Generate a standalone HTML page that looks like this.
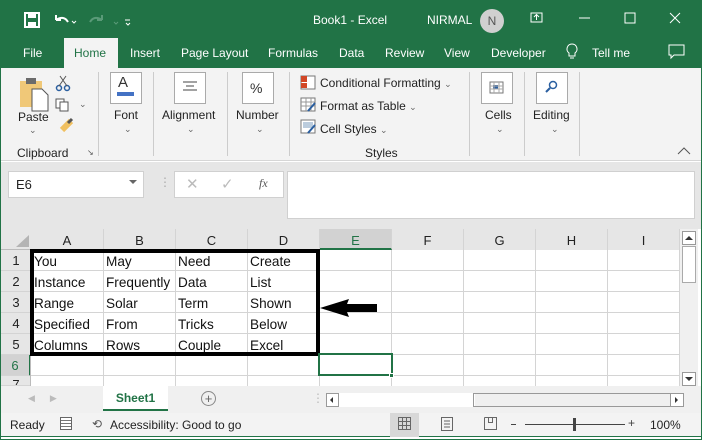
<!DOCTYPE html>
<html><head><meta charset="utf-8"><style>
*{margin:0;padding:0;box-sizing:border-box}
body{width:702px;height:440px;overflow:hidden;font-family:"Liberation Sans",sans-serif;background:#fff;position:relative;font-size:12px;color:#222}
.a{position:absolute}
.t{color:#fff;font-size:12px}
.rb{color:#222;font-size:12px}
.box{position:absolute;border:1px solid #aaa;background:#fff}
.sep{position:absolute;width:1px;background:#ccc}
.col{position:absolute;top:229px;height:21px;text-align:center;line-height:23px;font-size:13px;color:#222;border-right:1px solid #d4d4d4;background:#e6e6e6}
.row{position:absolute;left:1px;width:30px;text-align:center;font-size:13px;color:#222;background:#e6e6e6;border-bottom:1px solid #d4d4d4}
.c{position:absolute;font-size:13.6px;color:#111}
.ch{font-size:9px;color:#666}
</style></head><body>
<div class="a" style="left:0;top:0;width:702px;height:440px;border:1px solid #217346;border-radius:4px 4px 0 0"></div>
<div class="a" style="left:0;top:0;width:702px;height:68px;background:#217346"></div>
<svg class="a" style="left:24px;top:12px" width="110" height="18">
<rect x="1" y="1" width="14" height="14" fill="none" stroke="#fff" stroke-width="2"/><rect x="4" y="2" width="8" height="4" fill="#fff"/><rect x="4" y="10" width="8" height="5" fill="#fff"/>
<path d="M32 8 q8-5 12 2 M32 8 l0-5 M32 8 l5 0" stroke="#fff" stroke-width="2" fill="none"/>
<path d="M48 9 l2 2 l2-2" stroke="#fff" fill="none"/>
<path d="M78 8 q-8-5 -12 2 M78 8 l0-5 M78 8 l-5 0" stroke="#5a9a78" stroke-width="2" fill="none"/>
<path d="M90 10 l2 2 l2-2" stroke="#5a9a78" fill="none"/>
<path d="M101 8 h5 M102 11 l2 2 l2-2" stroke="#fff" fill="none"/>
</svg>
<div class="a t" style="left:313px;top:13px">Book1  -  Excel</div>
<div class="a t" style="left:427px;top:13px">NIRMAL</div>
<div class="a" style="left:480px;top:9px;width:24px;height:24px;border-radius:50%;background:#d0d0d0;color:#555;text-align:center;line-height:24px;font-size:12px">N</div>
<svg class="a" style="left:530px;top:11px" width="160" height="16">
<rect x="1" y="2" width="11" height="9" fill="none" stroke="#fff"/><path d="M6.5 9 V4 M4 6 l2.5-2.5 l2.5 2.5" stroke="#fff" fill="none"/>
<path d="M49 7 h11" stroke="#fff"/>
<rect x="95" y="2" width="10" height="10" fill="none" stroke="#fff"/>
<path d="M140 2 l10 10 M150 2 l-10 10" stroke="#fff"/>
</svg>
<div class="a" style="left:64px;top:38px;width:54px;height:30px;background:#f3f3f3"></div>
<div class="a t" style="left:23px;top:46px">File</div>
<div class="a" style="left:74px;top:46px;color:#217346">Home</div>
<div class="a t" style="left:130px;top:46px">Insert</div>
<div class="a t" style="left:181px;top:46px">Page Layout</div>
<div class="a t" style="left:268px;top:46px">Formulas</div>
<div class="a t" style="left:339px;top:46px">Data</div>
<div class="a t" style="left:385px;top:46px">Review</div>
<div class="a t" style="left:444px;top:46px">View</div>
<div class="a t" style="left:491px;top:46px">Developer</div>
<svg class="a" style="left:565px;top:43px" width="14" height="18"><path d="M7 1 a5 5 0 0 1 3 9 v3 h-6 v-3 a5 5 0 0 1 3-9 M5 15 h4" stroke="#fff" fill="none"/></svg>
<div class="a t" style="left:592px;top:46px">Tell me</div>
<svg class="a" style="left:668px;top:44px" width="18" height="16"><path d="M1 1 h15 v10 h-10 l-3 3 v-3 h-2 z" stroke="#fff" fill="none"/></svg>
<div class="a" style="left:1px;top:68px;width:700px;height:93px;background:#f3f3f3;border-bottom:1px solid #d6d6d6"></div>
<svg class="a" style="left:18px;top:75px" width="60" height="60">
<rect x="2" y="6" width="22" height="26" fill="#f0c878"/><rect x="8" y="3" width="10" height="6" fill="#6b6b6b"/>
<path d="M14 14 h10 l6 6 v16 h-16 z" fill="#fff" stroke="#555"/>
<circle cx="41" cy="13" r="2.5" fill="none" stroke="#2a5fa0" stroke-width="1.5"/><circle cx="49" cy="13" r="2.5" fill="none" stroke="#2a5fa0" stroke-width="1.5"/><path d="M42 1 l7 10 M48 1 l-7 10" stroke="#555"/>
<rect x="38" y="24" width="8" height="9" fill="#fff" stroke="#555"/><rect x="42" y="27" width="8" height="9" fill="#fff" stroke="#555"/>
<path d="M44 55 l9-9" stroke="#f0c060" stroke-width="6"/><path d="M50 48 l4-4" stroke="#555" stroke-width="3"/>
</svg>
<div class="a rb" style="left:18px;top:110px">Paste</div>
<div class="a ch" style="left:29px;top:125px">⌄</div>
<div class="a ch" style="left:79px;top:99px">⌄</div>
<div class="a rb" style="left:17px;top:146px">Clipboard</div>
<div class="a" style="left:87px;top:148px;font-size:8px;color:#555">↘</div>
<div class="sep" style="left:98px;top:72px;height:84px"></div>
<div class="box" style="left:110px;top:72px;width:32px;height:32px"></div>
<div class="a" style="left:118px;top:74px;font-size:15px;color:#333">A</div><div class="a" style="left:117px;top:92px;width:17px;height:4px;background:#4472c4"></div>
<div class="a rb" style="left:114px;top:108px">Font</div>
<div class="a ch" style="left:124px;top:124px">⌄</div>
<div class="sep" style="left:153px;top:72px;height:84px"></div>
<div class="box" style="left:174px;top:72px;width:32px;height:32px"></div>
<svg class="a" style="left:182px;top:81px" width="16" height="12"><path d="M1 1h14M4 5h8M1 9h14" stroke="#444"/></svg>
<div class="a rb" style="left:162px;top:108px">Alignment</div>
<div class="a ch" style="left:187px;top:124px">⌄</div>
<div class="sep" style="left:227px;top:72px;height:84px"></div>
<div class="box" style="left:242px;top:72px;width:32px;height:32px"></div>
<div class="a" style="left:250px;top:80px;font-size:14px;color:#333">%</div>
<div class="a rb" style="left:236px;top:108px">Number</div>
<div class="a ch" style="left:256px;top:124px">⌄</div>
<div class="sep" style="left:289px;top:72px;height:84px"></div>
<svg class="a" style="left:300px;top:75px" width="18" height="62">
<rect x="1" y="1" width="14" height="13" fill="#fff" stroke="#777"/><rect x="1" y="1" width="6" height="6" fill="#d24726"/><rect x="1" y="8" width="6" height="5" fill="#d24726"/>
<rect x="1" y="23" width="14" height="13" fill="#fff" stroke="#777"/><path d="M1 27h14M1 31h14M6 23v13M11 23v13" stroke="#999"/><path d="M8 36 l7-8" stroke="#2a5fa0" stroke-width="2"/>
<rect x="1" y="45" width="14" height="13" fill="#fff" stroke="#777"/><rect x="3" y="47" width="10" height="6" fill="#bcd"/><path d="M8 58 l7-8" stroke="#2a5fa0" stroke-width="2"/>
</svg>
<div class="a rb" style="left:320px;top:76px">Conditional Formatting <span class="ch">⌄</span></div>
<div class="a rb" style="left:320px;top:99px">Format as Table <span class="ch">⌄</span></div>
<div class="a rb" style="left:320px;top:122px">Cell Styles <span class="ch">⌄</span></div>
<div class="a rb" style="left:365px;top:146px">Styles</div>
<div class="sep" style="left:469px;top:72px;height:84px"></div>
<div class="box" style="left:481px;top:72px;width:32px;height:32px"></div>
<svg class="a" style="left:489px;top:79px" width="16" height="16"><rect x="1" y="3" width="13" height="11" fill="#fff" stroke="#777"/><rect x="4" y="6" width="5" height="4" fill="#2a5fa0"/><path d="M1 7h13M1 10h13M5 3v11M10 3v11" stroke="#aaa"/></svg>
<div class="a rb" style="left:485px;top:108px">Cells</div>
<div class="a ch" style="left:496px;top:124px">⌄</div>
<div class="sep" style="left:524px;top:72px;height:84px"></div>
<div class="box" style="left:536px;top:72px;width:32px;height:32px"></div>
<svg class="a" style="left:545px;top:80px" width="14" height="14"><circle cx="8" cy="5" r="3.5" fill="none" stroke="#2a5fa0" stroke-width="1.5"/><path d="M5 8 l-4 4" stroke="#2a5fa0" stroke-width="2"/></svg>
<div class="a rb" style="left:533px;top:108px">Editing</div>
<div class="a ch" style="left:551px;top:124px">⌄</div>
<div class="sep" style="left:579px;top:72px;height:84px"></div>
<svg class="a" style="left:677px;top:146px" width="14" height="9"><path d="M1 8 l6-6 l6 6" stroke="#555" fill="none"/></svg>
<div class="a" style="left:1px;top:162px;width:700px;height:67px;background:#e6e6e6"></div>
<div class="box" style="left:8px;top:171px;width:136px;height:27px;border-color:#d0d0d0"></div>
<div class="a" style="left:16px;top:177px;font-size:13px">E6</div>
<div class="a" style="left:129px;top:180px;width:0;height:0;border-left:4px solid transparent;border-right:4px solid transparent;border-top:4px solid #666"></div>
<div class="a" style="left:159px;top:175px;color:#aaa;font-size:12px">⋮</div>
<div class="box" style="left:174px;top:171px;width:110px;height:27px;border-color:#d0d0d0"></div>
<div class="a" style="left:186px;top:175px;color:#bbb;font-size:15px">✕</div>
<div class="a" style="left:221px;top:175px;color:#bbb;font-size:15px">✓</div>
<div class="a" style="left:259px;top:176px;color:#555;font-size:12px;font-style:italic;font-family:'Liberation Serif',serif">fx</div>
<div class="box" style="left:287px;top:171px;width:408px;height:48px;border-color:#d0d0d0"></div>
<div class="a" style="left:1px;top:229px;width:679px;height:21px;background:#e6e6e6;border-bottom:1px solid #bbb"></div>
<svg class="a" style="left:14px;top:234px" width="16" height="14"><path d="M15 1 V13 H2 z" fill="#b4b4b4"/></svg>
<div class="col" style="left:31px;width:73px">A</div>
<div class="col" style="left:104px;width:72px">B</div>
<div class="col" style="left:176px;width:72px">C</div>
<div class="col" style="left:248px;width:72px">D</div>
<div class="col" style="left:320px;width:72px;background:#d2d2d2;color:#217346;border-bottom:2px solid #217346">E</div>
<div class="col" style="left:392px;width:72px">F</div>
<div class="col" style="left:464px;width:72px">G</div>
<div class="col" style="left:536px;width:72px">H</div>
<div class="col" style="left:608px;width:72px">I</div>
<svg class="a" style="left:31px;top:250px" width="649" height="136">
<g stroke="#d4d4d4" stroke-width="1">
<path d="M0 20.5h649M0 41.5h649M0 62.5h649M0 83.5h649M0 104.5h649M0 125.5h649"/>
<path d="M72.5 0v136M144.5 0v136M216.5 0v136M288.5 0v136M360.5 0v136M432.5 0v136M504.5 0v136M576.5 0v136M648.5 0v136"/>
</g></svg>
<div class="row" style="top:250px;height:21px;line-height:22px">1</div>
<div class="row" style="top:271px;height:21px;line-height:22px">2</div>
<div class="row" style="top:292px;height:21px;line-height:22px">3</div>
<div class="row" style="top:313px;height:21px;line-height:22px">4</div>
<div class="row" style="top:334px;height:21px;line-height:22px">5</div>
<div class="row" style="top:355px;height:21px;line-height:22px;background:#d2d2d2;color:#217346;border-right:2px solid #217346">6</div>
<div class="row" style="top:376px;height:10px;line-height:18px;overflow:hidden">7</div>
<div class="a" style="left:30px;top:250px;width:1px;height:136px;background:#bbb"></div>
<div class="c" style="left:34px;top:254px">You</div><div class="c" style="left:106px;top:254px">May</div><div class="c" style="left:178px;top:254px">Need</div><div class="c" style="left:250px;top:254px">Create</div>
<div class="c" style="left:34px;top:275px">Instance</div><div class="c" style="left:106px;top:275px">Frequently</div><div class="c" style="left:178px;top:275px">Data</div><div class="c" style="left:250px;top:275px">List</div>
<div class="c" style="left:34px;top:296px">Range</div><div class="c" style="left:106px;top:296px">Solar</div><div class="c" style="left:178px;top:296px">Term</div><div class="c" style="left:250px;top:296px">Shown</div>
<div class="c" style="left:34px;top:317px">Specified</div><div class="c" style="left:106px;top:317px">From</div><div class="c" style="left:178px;top:317px">Tricks</div><div class="c" style="left:250px;top:317px">Below</div>
<div class="c" style="left:34px;top:338px">Columns</div><div class="c" style="left:106px;top:338px">Rows</div><div class="c" style="left:178px;top:338px">Couple</div><div class="c" style="left:250px;top:338px">Excel</div>
<div class="a" style="left:30px;top:249px;width:290px;height:107px;border:4px solid #000"></div>
<svg class="a" style="left:319px;top:296px" width="62" height="24"><path d="M1 12 L30 3 L28 8 L58 8 L58 16 L28 16 L30 21 Z" fill="#000"/></svg>
<div class="a" style="left:318px;top:353px;width:75px;height:23px;border:2px solid #217346"></div>
<div class="a" style="left:389px;top:373px;width:5px;height:5px;background:#217346;border:1px solid #fff"></div>
<div class="a" style="left:680px;top:229px;width:18px;height:157px;background:#f0f0f0"></div>
<div class="a" style="left:682px;top:231px;width:14px;height:14px;border:1px solid #999;background:#fff"></div>
<div class="a" style="left:685px;top:236px;border-left:4px solid transparent;border-right:4px solid transparent;border-bottom:4px solid #333"></div>
<div class="a" style="left:682px;top:246px;width:14px;height:37px;border:1px solid #aaa;background:#fff"></div>
<div class="a" style="left:682px;top:372px;width:14px;height:14px;border:1px solid #999;background:#fff"></div>
<div class="a" style="left:685px;top:377px;border-left:4px solid transparent;border-right:4px solid transparent;border-top:4px solid #333"></div>
<div class="a" style="left:1px;top:386px;width:700px;height:27px;background:#f0f0f0"></div>
<div class="a" style="left:28px;top:393px;color:#bbb;font-size:9px">◀&nbsp;&nbsp;&nbsp;&nbsp;&nbsp;&nbsp;▶</div>
<div class="a" style="left:103px;top:386px;width:65px;height:25px;background:#fff;border-bottom:2px solid #217346;color:#217346;font-weight:bold;text-align:center;line-height:24px;font-size:12px">Sheet1</div>
<div class="a" style="left:201px;top:391px;width:15px;height:15px;border:1px solid #888;border-radius:50%;text-align:center;line-height:13px;color:#666;font-size:13px">+</div>
<div class="a" style="left:312px;top:391px;color:#bbb">⋮</div>
<div class="a" style="left:326px;top:393px;width:358px;height:14px;border:1px solid #999;background:#fff"></div>
<div class="a" style="left:338px;top:393px;width:136px;height:14px;border-left:1px solid #999;border-right:1px solid #999;background:#fff"></div>
<div class="a" style="left:475px;top:394px;width:195px;height:12px;background:#f0f0f0"></div>
<div class="a" style="left:330px;top:397px;border-top:3px solid transparent;border-bottom:3px solid transparent;border-right:3px solid #333"></div>
<div class="a" style="left:675px;top:397px;border-top:3px solid transparent;border-bottom:3px solid transparent;border-left:3px solid #333"></div>
<div class="a" style="left:670px;top:393px;width:1px;height:14px;background:#999"></div>
<div class="a" style="left:1px;top:413px;width:700px;height:24px;background:#f3f3f3;border-bottom:1px solid #217346"></div>
<div class="a" style="left:10px;top:418px;font-size:12px">Ready</div>
<div class="a" style="left:60px;top:417px;width:12px;height:13px;border:1px solid #666;background:repeating-linear-gradient(#fff 0 2px,#777 2px 3px)"></div>
<div class="a" style="left:92px;top:417px;color:#555;font-size:12px">⟲</div>
<div class="a" style="left:110px;top:418px;font-size:12px">Accessibility: Good to go</div>
<div class="a" style="left:390px;top:413px;width:29px;height:24px;background:#d8d8d8"></div>
<svg class="a" style="left:398px;top:417px" width="110" height="16">
<rect x="0.5" y="0.5" width="12" height="12" fill="none" stroke="#666"/><path d="M4.5 1v12M8.5 1v12M1 4.5h12M1 8.5h12" stroke="#666"/>
<rect x="43.5" y="0.5" width="11" height="13" fill="none" stroke="#666"/><path d="M46 4h6M46 7h6M46 10h6" stroke="#666"/>
<path d="M86.5 0.5v12h12v-12h-12M90.5 0.5v5h4v-5" fill="none" stroke="#666"/>
</svg>
<div class="a" style="left:511px;top:424px;width:5px;height:1px;background:#444"></div>
<div class="a" style="left:525px;top:424px;width:100px;height:1px;background:#444"></div>
<div class="a" style="left:573px;top:418px;width:3px;height:13px;background:#444"></div>
<div class="a" style="left:628px;top:416px;font-size:12px;color:#444">+</div>
<div class="a" style="left:650px;top:418px;font-size:12px">100%</div>
</body></html>
